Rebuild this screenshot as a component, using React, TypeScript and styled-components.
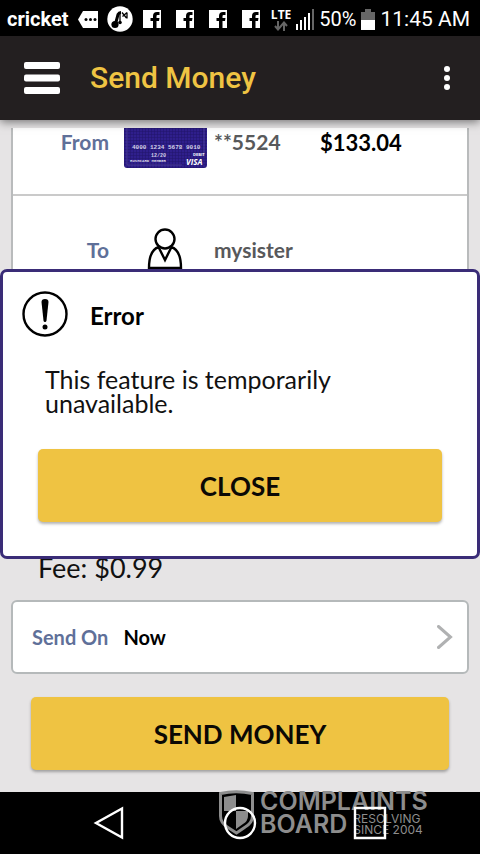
import React from "react";
import styled, { createGlobalStyle } from "styled-components";

const sans = `Lato, "Open Sans", sans-serif`;
const system = `Roboto, "Noto Sans", sans-serif`;

const GlobalStyle = createGlobalStyle`
  * { box-sizing: border-box; }
  body { margin: 0; background: #000; font-family: ${sans}; }
  button { font: inherit; border: 0; padding: 0; cursor: pointer; }
  svg { display: block; flex: none; }
`;

const Phone = styled.div`
  min-height: 100vh;
  display: flex;
  flex-direction: column;
`;

const StatusBar = styled.div`
  height: 36px;
  padding: 2px 10px 0 7px;
  display: flex;
  align-items: center;
  justify-content: space-between;
  background: #000;
  color: #fff;
  font: 400 20px ${system};
  white-space: nowrap;
`;

const StatusGroup = styled.div<{ $gap: number }>`
  display: flex;
  align-items: center;
  gap: ${(p) => p.$gap}px;
`;

const Carrier = styled.span`
  font-weight: 700;
`;

const Clock = styled.span`
  font-size: 21px;
`;

const Notifications = styled.div`
  padding-left: 1px;
  display: flex;
  align-items: center;
  gap: 15px;
`;

const Network = styled.div`
  display: flex;
  flex-direction: column;
  align-items: center;
  font: 700 12px/13px "Open Sans", sans-serif;
`;

const Screen = styled.div`
  position: relative;
  flex: 1;
  display: flex;
  flex-direction: column;
`;

const AppBar = styled.header`
  position: relative;
  height: 84px;
  padding: 0 14px 0 24px;
  display: flex;
  align-items: center;
  gap: 30px;
  background: #231f20;
  box-shadow: 0 2px 9px rgba(0, 0, 0, 0.5);
`;

const IconButton = styled.button`
  background: none;
`;

const MoreButton = styled(IconButton)`
  width: 38px;
  display: flex;
  justify-content: center;
`;

const Title = styled.h1`
  flex: 1;
  margin: 0;
  color: #efc443;
  font: 500 30px/36px ${system};
`;

const Content = styled.main`
  flex: 1;
  padding: 8px 11px 22px;
  display: flex;
  flex-direction: column;
  background: #e6e4e5;
`;

const Transfer = styled.section`
  flex: 1;
  margin-bottom: 10px;
  border: 2px solid #b9bbbc;
  border-top: 0;
  border-radius: 0 0 6px 6px;
  background: #fff;
`;

const TransferRow = styled.div<{ $height: number; $top: number }>`
  height: ${(p) => p.$height}px;
  padding-top: ${(p) => p.$top}px;
  display: grid;
  grid-template-columns: 111px 90px 106px 1fr;
  align-items: start;
  border-bottom: 2px solid #cacaca;
  font-size: 21px;
  font-weight: 700;
`;

const Label = styled.span`
  padding-right: 15px;
  color: #5f7099;
  text-align: right;
`;

const RowLabel = styled(Label)<{ $line: number }>`
  line-height: ${(p) => p.$line}px;
`;

const Detail = styled.span<{ $line: number }>`
  color: #58595b;
  line-height: ${(p) => p.$line}px;
`;

const Balance = styled.span`
  color: #000;
  font-size: 22px;
  line-height: 30px;
`;

const PersonSlot = styled.span`
  padding-left: 22px;
`;

const Fee = styled.p`
  margin: 0 0 17px 27px;
  color: #111;
  font-size: 27px;
  line-height: 30px;
`;

const SendOn = styled.button`
  height: 74px;
  padding: 0 14px 0 19px;
  display: flex;
  align-items: center;
  border: 2px solid #b5b9ba;
  border-radius: 6px;
  background: #fff;
  color: #000;
  font-size: 20px;
  font-weight: 700;
`;

const When = styled.span`
  flex: 1;
  text-align: left;
`;

const ActionButton = styled.button`
  height: 73px;
  border-radius: 5px;
  background: #efc342;
  color: #0b0905;
  box-shadow: 0 2px 3px rgba(0, 0, 0, 0.3);
  font-size: 26px;
  font-weight: 700;
`;

const SendButton = styled(ActionButton)`
  margin: 23px 20px 0;
`;

const Overlay = styled.div`
  position: absolute;
  inset: 0;
  display: flex;
  flex-direction: column;
  justify-content: center;
`;

const Dialog = styled.section`
  padding: 19px 35px 34px;
  display: flex;
  flex-direction: column;
  border: 3px solid #3a2c77;
  border-radius: 7px;
  background: #fff;
`;

const DialogHeader = styled.div`
  margin-left: -16px;
  display: flex;
  align-items: center;
  gap: 22px;
`;

const DialogTitle = styled.h2`
  margin: 0;
  padding-top: 4px;
  font-size: 24px;
  font-weight: 700;
  line-height: 28px;
`;

const Message = styled.p`
  margin: 30px 7px 34px;
  color: #111;
  font-size: 25px;
  line-height: 24px;
`;

const NavBar = styled.nav`
  position: relative;
  height: 62px;
  display: grid;
  grid-template-columns: repeat(3, 130px);
  justify-content: center;
  justify-items: center;
  align-items: center;
  background: #000;
`;

const NavButton = styled(IconButton)`
  position: relative;
`;

const Watermark = styled.div`
  position: absolute;
  top: -2px;
  left: 219px;
  display: flex;
  gap: 6px;
  color: #8d8d8d;
  font-family: Inter, sans-serif;
  font-weight: 600;
  white-space: nowrap;
`;

const Brand = styled.div`
  font-size: 25px;
  line-height: 22px;
`;

const BrandBottom = styled(Brand)`
  display: flex;
  gap: 6px;
  align-items: center;
`;

const Tagline = styled.span`
  padding-top: 1px;
  display: flex;
  flex-direction: column;
  font-size: 12px;
  font-weight: 400;
  line-height: 11px;
`;

const TagIcon = () => (
  <svg width="20" height="17" viewBox="0 0 20 17">
    <path d="M5 0h15v17H5L0 8.5z" fill="#fff" />
    <g fill="#000">
      <circle cx="8" cy="8.5" r="1.5" />
      <circle cx="12.5" cy="8.5" r="1.5" />
      <circle cx="17" cy="8.5" r="1.5" />
    </g>
  </svg>
);

const MusicIcon = () => (
  <svg width="26" height="26" viewBox="0 0 26 26">
    <circle cx="13" cy="13" r="12.7" fill="#fff" />
    <circle cx="8" cy="18.5" r="3.6" fill="#000" />
    <circle cx="13" cy="16.5" r="1.8" fill="#000" />
    <path d="M8.500 18l2.500-9.500q1-2 3-2" stroke="#000" strokeWidth="3" fill="none" />
    <path d="M13 7v9M15 6.500l4.500 5.500M20 6.500l-4.500 4M20 6.500v6" stroke="#000" strokeWidth="1.3" fill="none" />
  </svg>
);

const SocialIcon = () => (
  <svg width="18" height="18" viewBox="0 0 18 18">
    <path d="M0 0h18v18H0z" fill="#fff" />
    <path d="M10 18v-7H7.500V8H10V6Q10 2 14 2h2.500v3h-2Q13.500 5 13.500 6.200V8h3l-.5 3h-2.500v7z" fill="#000" />
  </svg>
);

const DataArrows = () => (
  <svg width="14" height="10" viewBox="0 0 14 10">
    <path d="M4 0v8M1 5l3 3.500L7 5M10 10V2M7 5l3-3.500L13 5" stroke="#666" strokeWidth="2" fill="none" />
  </svg>
);

const SignalIcon = () => (
  <svg width="18" height="21" viewBox="0 0 18 21">
    <path d="M0 15h2v6H0zM4 11h2v10H4zM8 8h2v13H8zM12 4h2v17h-2z" fill="#fff" />
    <path d="M16 0h2v21h-2z" fill="#666" />
  </svg>
);

const BatteryIcon = () => (
  <svg width="14" height="21" viewBox="0 0 14 21">
    <path d="M4 0h6v3h4v8H0V3h4z" fill="#666" />
    <path d="M0 11h14v10H0z" fill="#fff" />
  </svg>
);

const MenuIcon = () => (
  <svg width="36" height="32" viewBox="0 0 36 32" fill="#fff">
    <rect width="36" height="7" rx="2" />
    <rect y="12.5" width="36" height="7" rx="2" />
    <rect y="25" width="36" height="7" rx="2" />
  </svg>
);

const MoreIcon = () => (
  <svg width="6" height="24" viewBox="0 0 6 24" fill="#fff">
    <circle cx="3" cy="3" r="3" />
    <circle cx="3" cy="12" r="3" />
    <circle cx="3" cy="21" r="3" />
  </svg>
);

const BankCard = () => (
  <svg width="83" height="40" viewBox="0 0 83 40" role="img" aria-label="Debit card">
    <defs>
      <pattern id="weave" width="3" height="3" patternUnits="userSpaceOnUse">
        <path d="M0 0h3v3H0z" fill="#2f1f8c" />
        <path d="M0 0h3M0 0v3" stroke="#21146b" strokeWidth="1" />
      </pattern>
    </defs>
    <path d="M0 0h83v37q0 3-3 3H3q-3 0-3-3z" fill="url(#weave)" />
    <path d="M3 0v37h55M80 0v28" stroke="#5b4fa5" strokeWidth="1" fill="none" opacity=".6" />
    <g fill="#d5d2e6" fontFamily="Liberation Mono, monospace">
      <text x="8" y="21" fontSize="6">4000 1234 5678 9010</text>
      <text x="27" y="29" fontSize="5">12/20</text>
      <text x="6" y="34" fontSize="4">RUSHCARD MEMBER</text>
    </g>
    <g fill="#fff" fontFamily="Open Sans, sans-serif" fontWeight="700">
      <text x="69" y="28" fontSize="4">DEBIT</text>
      <text x="62" y="37" fontSize="8" fontStyle="italic">VISA</text>
    </g>
  </svg>
);

const PersonIcon = () => (
  <svg width="38" height="44" viewBox="0 0 38 44" fill="none" stroke="#000" strokeWidth="2.4">
    <circle cx="19" cy="11" r="9.5" />
    <path d="M13 19C6 21 3 29 3 40h32C35 29 32 21 25 19M13 20l6 12 6-12" />
  </svg>
);

const AlertIcon = () => (
  <svg width="46" height="46" viewBox="0 0 46 46">
    <circle cx="23" cy="23" r="21.5" fill="none" stroke="#000" strokeWidth="2.4" />
    <path d="M19.500 11q0-3 3.500-3t3.500 3l-2 18.500q-.2 1.500-1.500 1.500t-1.500-1.500z" />
    <circle cx="23" cy="36" r="2.5" />
  </svg>
);

const ChevronIcon = () => (
  <svg width="16" height="24" viewBox="0 0 16 24">
    <path d="M1.500 1.500L13.500 12 1.500 22.500" fill="none" stroke="#b0b1b2" strokeWidth="3" strokeLinecap="round" />
  </svg>
);

const ShieldIcon = () => (
  <svg width="35" height="45" viewBox="0 0 35 45">
    <path d="M1.500 3.500Q17 0 33.500 3.500V26q0 7-8 11.500L17.500 43 9 37.500Q1.500 33 1.500 26z" fill="none" stroke="#8d8d8d" strokeWidth="3" />
    <path d="M5 7l12-2v16H5zM17 21h12v5q0 5-5 8l-7 5z" fill="#8d8d8d" />
  </svg>
);

const strokeProps = { fill: "none", stroke: "#fff", strokeWidth: 2.4 };

export default function App() {
  return (
    <>
      <GlobalStyle />
      <Phone>
        <StatusBar>
          <StatusGroup $gap={9}>
            <Carrier>cricket</Carrier>
            <TagIcon />
            <MusicIcon />
            <Notifications>
              <SocialIcon />
              <SocialIcon />
              <SocialIcon />
              <SocialIcon />
            </Notifications>
          </StatusGroup>
          <StatusGroup $gap={5}>
            <Network>
              LTE
              <DataArrows />
            </Network>
            <SignalIcon />
            <span>50%</span>
            <BatteryIcon />
            <Clock>11:45 AM</Clock>
          </StatusGroup>
        </StatusBar>
        <Screen>
          <AppBar>
            <IconButton aria-label="Menu">
              <MenuIcon />
            </IconButton>
            <Title>Send Money</Title>
            <MoreButton aria-label="More options">
              <MoreIcon />
            </MoreButton>
          </AppBar>
          <Content>
            <Transfer>
              <TransferRow $height={68} $top={0}>
                <RowLabel $line={28}>From</RowLabel>
                <BankCard />
                <Detail $line={28}>**5524</Detail>
                <Balance>$133.04</Balance>
              </TransferRow>
              <TransferRow $height={108} $top={32}>
                <RowLabel $line={44}>To</RowLabel>
                <PersonSlot>
                  <PersonIcon />
                </PersonSlot>
                <Detail $line={44}>mysister</Detail>
              </TransferRow>
            </Transfer>
            <Fee>Fee: $0.99</Fee>
            <SendOn>
              <Label>Send On</Label>
              <When>Now</When>
              <ChevronIcon />
            </SendOn>
            <SendButton>SEND MONEY</SendButton>
          </Content>
          <Overlay>
            <Dialog role="alertdialog" aria-labelledby="dialog-title" aria-describedby="dialog-message">
              <DialogHeader>
                <AlertIcon />
                <DialogTitle id="dialog-title">Error</DialogTitle>
              </DialogHeader>
              <Message id="dialog-message">This feature is temporarily unavailable.</Message>
              <ActionButton>CLOSE</ActionButton>
            </Dialog>
          </Overlay>
        </Screen>
        <NavBar aria-label="System">
          <Watermark>
            <ShieldIcon />
            <div>
              <Brand>COMPLAINTS</Brand>
              <BrandBottom>
                BOARD
                <Tagline>
                  <span>RESOLVING</span>
                  <span>SINCE 2004</span>
                </Tagline>
              </BrandBottom>
            </div>
          </Watermark>
          <NavButton aria-label="Back">
            <svg width="34" height="34" viewBox="0 0 34 34" {...strokeProps}>
              <path d="M29 2.500v29L3 17z" />
            </svg>
          </NavButton>
          <NavButton aria-label="Home">
            <svg width="34" height="34" viewBox="0 0 34 34" {...strokeProps}>
              <circle cx="17" cy="17" r="15" />
            </svg>
          </NavButton>
          <NavButton aria-label="Recent apps">
            <svg width="34" height="34" viewBox="0 0 34 34" {...strokeProps}>
              <path d="M2 2h30v30H2z" />
            </svg>
          </NavButton>
        </NavBar>
      </Phone>
    </>
  );
}
